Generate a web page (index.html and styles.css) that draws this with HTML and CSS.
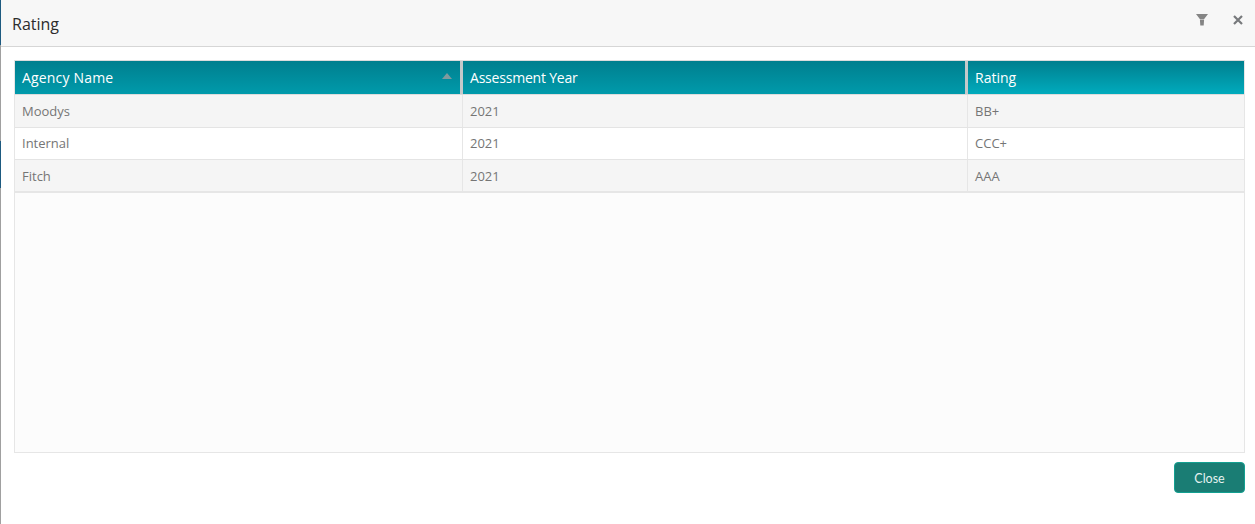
FILE: index.html
```html
<!DOCTYPE html>
<html lang="en">
<head>
<meta charset="utf-8">
<title>Rating</title>
<link rel="stylesheet" href="styles.css">
</head>
<body>
<div class="page">
  <div class="edge"></div>
  <div class="dialog">
    <header class="dialog-head">
      <h1 class="dialog-title">Rating</h1>
      <div class="head-tools">
        <svg class="icon" width="14" height="14" viewBox="0 0 14 14"><path d="M1 1h12l-3.800 5H4.800z M4.900 6.400h4.200l-0.400 6.100H5.300z" fill="#858585"/></svg>
        <svg class="icon" width="12" height="12" viewBox="0 0 12 12"><path d="M2 2l8 8M10 2l-8 8" stroke="#77797c" stroke-width="2.200" fill="none"/></svg>
      </div>
    </header>
    <main class="dialog-body">
      <div class="grid-box">
        <div class="row head">
          <div class="cell c1 hcell wide">Agency Name<span class="sort"></span></div>
          <div class="cell c2 hcell tight">Assessment Year</div>
          <div class="cell c3 hcell last">Rating</div>
        </div>
        <div class="row odd first">
          <div class="cell c1">Moodys</div><div class="cell c2">2021</div><div class="cell c3">BB+</div>
        </div>
        <div class="row raised">
          <div class="cell c1">Internal</div><div class="cell c2">2021</div><div class="cell c3">CCC+</div>
        </div>
        <div class="row odd closing">
          <div class="cell c1">Fitch</div><div class="cell c2">2021</div><div class="cell c3">AAA</div>
        </div>
      </div>
    </main>
    <footer class="dialog-foot">
      <button class="close-btn" type="button">Close</button>
    </footer>
  </div>
</div>
</body>
</html>
```
FILE: styles.css
```css
* { box-sizing: border-box; }
html, body { margin: 0; height: 100%; background: #fff; }
.page { display: flex; width: 1255px; height: 524px; overflow: hidden; font-family: "Open Sans", "Noto Sans", sans-serif; }
.edge { width: 1px; flex: none; background: linear-gradient(to bottom, #1d5a80 0, #1d5a80 45px, #a0a0a0 45px, #a0a0a0 141px, #1d5a80 141px, #1d5a80 188px, #a0a0a0 188px, #a0a0a0 100%); }
.dialog { flex: 1; display: flex; flex-direction: column; min-width: 0; }
.dialog-head { height: 47px; flex: none; display: flex; align-items: center; justify-content: space-between; background: #f7f7f7; border-bottom: 1px solid #d6d6d6; padding: 0 11px 0 11px; }
.dialog-title { margin: 2px 0 0; font-size: 16px; font-weight: 400; color: #2c2c2c; }
.head-tools { display: flex; align-items: center; gap: 23px; margin-bottom: 7px; }
.icon { display: block; }
.dialog-body { height: 406px; flex: none; padding: 13px 10px 0 13px; }
.grid-box { height: 393px; background: #fcfcfc; border: 1px solid #e6e6e6; border-top: 1px solid #dcdcdc; }
.row { display: flex; height: 32px; border-bottom: 1px solid #e4e4e4; background: #fff; }
.row.odd { background: #f5f5f5; }
.row.first { height: 33px; }
.row.raised .cell { padding-bottom: 1px; }
.row.closing { border-bottom: 2px solid #e6e6e6; height: 33px; }
.row.head { height: 34px; border-bottom: 1px solid #dcdcdc; background: #d5d5d5; }
.cell { display: flex; align-items: center; padding-left: 7px; font-size: 13px; color: #757575; border-right: 1px solid #e6e6e6; }
.c1 { width: 448px; flex: none; }
.c2 { width: 505px; flex: none; }
.c3 { flex: 1; border-right: 0; }
.hcell { position: relative; font-size: 14px; color: #fff; background: linear-gradient(to bottom, #007f8e, #009aab); border-right: 3px solid #c4c9ca; height: 33px; }
.hcell.wide { letter-spacing: 0.18px; }
.hcell.tight { letter-spacing: -0.2px; }
.hcell.last { border-right: 0; background: linear-gradient(to bottom, #007f8e, #00abbd); }
.sort { position: absolute; right: 8px; top: 12px; width: 0; height: 0; border-left: 5px solid transparent; border-right: 5px solid transparent; border-bottom: 6px solid #7f9a9e; }
.dialog-foot { flex: 1; display: flex; justify-content: flex-end; align-items: flex-start; padding: 9px 10px 0 0; }
.close-btn { width: 71px; height: 31px; border: 1px solid #13a091; border-radius: 4px; background: #1a7d74; color: #e6f2f0; font-family: "Lato", sans-serif; font-size: 12.5px; padding: 2px 0 0; }
```
